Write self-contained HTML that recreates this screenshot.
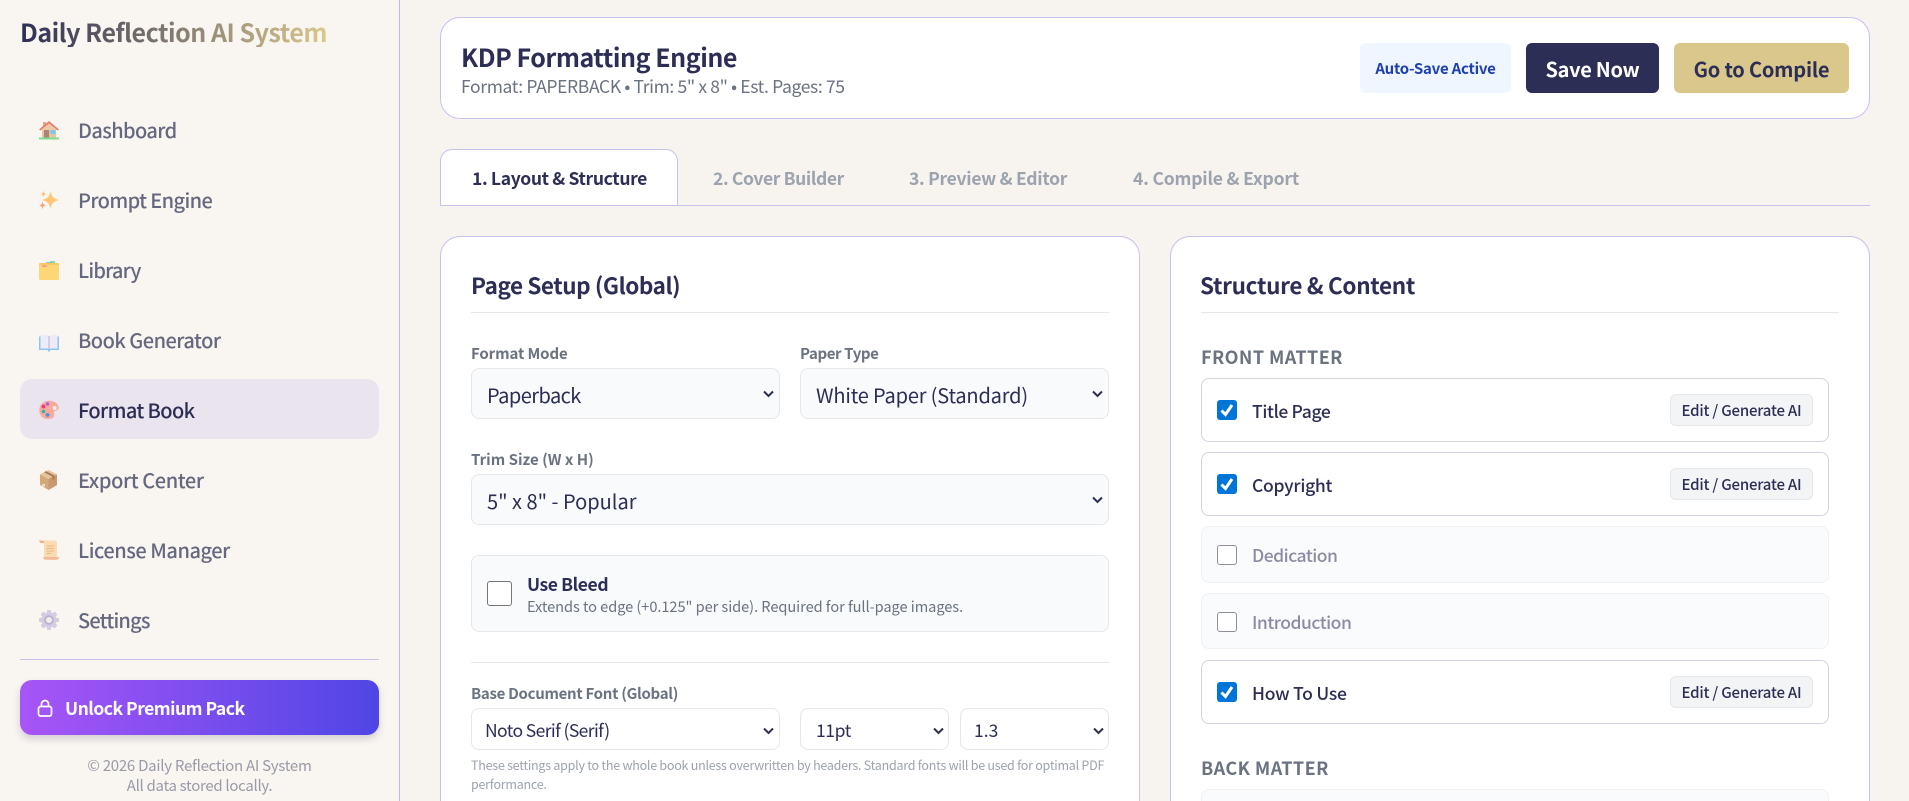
<!DOCTYPE html>
<html lang="en"><head><meta charset="utf-8"><title>KDP Formatting Engine</title>
<style>
*{box-sizing:border-box;margin:0;padding:0}
html,body{width:1909px;height:801px;overflow:hidden;background:#f7f4ef}
body{position:relative;font-family:"Noto Sans CJK JP","Liberation Sans",sans-serif;color:#2d2e55}
.b{position:absolute}
.t{position:absolute;height:30px;line-height:30px;white-space:nowrap}
.nav{font-size:20px;font-weight:500;color:#666880;left:78px;letter-spacing:-.62px}
.card{position:absolute;background:#fff;border:1.25px solid #c9c0ec;border-radius:20px}
.lab{font-size:15px;font-weight:700;color:#6b7280}
.sel{position:absolute;background:#f9fafb;border:1.25px solid #e5e7eb;border-radius:8px}
.seltxt{font-size:20px;color:#2d2e55}
.h2{font-size:22.5px;font-weight:700}
.item{position:absolute;left:1201px;width:628px;border:1.25px solid #d3d3de;border-radius:8px;background:#fff}
.item.off{background:#fafbfd;border-color:#f0f1f5}
.cb{position:absolute;left:1217px;width:20px;height:20px;border-radius:3px}
.cb.on{background:#0075d8}
.cb.no{background:#fff;border:1.25px solid #8f8f9a}
.il{left:1252px;font-size:17.5px;font-weight:500}
.il.dim{color:#8b8ca3}
.btn{position:absolute;left:1670px;width:143px;height:32px;background:#f3f4f6;border:1.25px solid #e5e7eb;border-radius:6px;font-size:15px;font-weight:500;line-height:31px;text-align:center;letter-spacing:-.2px}
.sec{left:1201px;font-size:18px;font-weight:700;color:#6b7280;letter-spacing:.42px}
svg{position:absolute;display:block}
</style></head><body>

<!-- Sidebar -->
<div class="b" style="left:0;top:0;width:400px;height:801px;background:#f9f6f1;border-right:1.25px solid #c4b9e6"></div>
<div class="t" style="left:20px;top:17px;font-size:25px;font-weight:700;letter-spacing:-.49px;background:linear-gradient(90deg,#2d2e55,#dcc98d);-webkit-background-clip:text;background-clip:text;color:transparent;width:310px">Daily Reflection AI System</div>

<div class="b" style="left:20px;top:379px;width:359px;height:60px;background:#e9e4ee;border-radius:12px"></div>

<!-- house -->
<svg style="left:39px;top:120px" width="20" height="20" viewBox="0 0 20 20"><rect x="3" y="8" width="14" height="10" fill="#e5c5a0"/><rect x="4" y="2" width="3" height="5" fill="#d9a98a"/><path d="M0 9.500 10 1l10 8.500-1.500 1L10 3.500 1.500 10.500z" fill="#ee7a68"/><path d="M3 9 10 3.500 17 9v2H3z" fill="#eccaa6"/><rect x="5" y="10" width="5" height="8" fill="#a98278"/><rect x="11.500" y="10" width="5" height="4" fill="#79c8f2"/><rect x="0" y="17.500" width="20" height="2" fill="#7fdc90"/></svg>
<div class="t nav" style="top:115px">Dashboard</div>
<!-- sparkles -->
<svg style="left:39px;top:190px" width="20" height="20" viewBox="0 0 20 20"><path d="M11.500 1C12.500 6.500 14.500 8.500 20 10 14.500 11.500 12.500 13.500 11.500 19 10.500 13.500 8.500 11.500 3 10 8.500 8.500 10.500 6.500 11.500 1z" fill="#fdc676"/><path d="M4.500 .5C4.900 2.800 5.500 3.500 7.500 4 5.500 4.500 4.900 5.200 4.500 7.500 4.100 5.200 3.500 4.500 1.500 4 3.500 3.500 4.100 2.800 4.500 .5z" fill="#f9c487"/><path d="M3.500 11.500C4 14 4.800 14.700 7 15.300 4.800 15.900 4 16.600 3.500 19.500 3 16.600 2.200 15.900 0 15.300 2.200 14.700 3 14 3.500 11.500z" fill="#f7a184"/></svg>
<div class="t nav" style="top:185px">Prompt Engine</div>
<!-- folder -->
<svg style="left:39px;top:260px" width="20" height="20" viewBox="0 0 20 20"><rect x="11" y="1" width="5" height="2.500" rx=".8" fill="#84d8a0"/><rect x="7" y="2.300" width="5" height="2.500" rx=".8" fill="#76aee4"/><path d="M0 4.500Q0 3 1.500 3H18.500Q20 3 20 4.500V18.500Q20 20 18.500 20H1.500Q0 20 0 18.500z" fill="#fdd676"/><path d="M0 4.500Q0 3 1.500 3H18.500Q20 3 20 4.500V5H0z" fill="#f6c765"/><rect x="3" y="5.300" width="5" height="1.700" rx=".7" fill="#f5978a"/></svg>
<div class="t nav" style="top:255px;letter-spacing:-.8px">Library</div>
<!-- book -->
<svg style="left:39px;top:334px" width="20" height="18" viewBox="0 0 20 18"><path d="M0 2.500V16H8Q9 16 9 17.500H11Q11 16 12 16H20V2.500z" fill="#8cc6f2"/><path d="M1.500 1Q7 .3 10 2 13 .3 18.500 1V14.500H11.500Q10 14.500 10 15.500 10 14.500 8.500 14.500H1.500z" fill="#ecebf7"/><path d="M10 2V15.500" stroke="#b4b2cc" stroke-width="1"/></svg>
<div class="t nav" style="top:325px;letter-spacing:-.53px">Book Generator</div>
<!-- palette -->
<svg style="left:39px;top:400px" width="20" height="20" viewBox="0 0 20 20"><path d="M10 .8C15.500.8 19.700 4.300 19.700 7.800 19.700 11 15.500 10.500 14.800 12 14.200 13.500 16 14.500 15 16.500 13.800 18.800 11 19 8.500 19 3.500 19 .3 15 .3 10 .3 5 4.500.8 10 .8z" fill="#fba99a"/><circle cx="15.700" cy="8" r="2" fill="#f6f1f0"/><circle cx="8.500" cy="4" r="1.800" fill="#b05ce0"/><circle cx="4.500" cy="6.500" r="1.900" fill="#e83a80"/><circle cx="4.500" cy="11.500" r="1.800" fill="#29b8a4"/><circle cx="8.500" cy="15" r="1.900" fill="#3d92ee"/></svg>
<div class="t nav" style="top:395px;color:#2d2e55">Format Book</div>
<!-- package -->
<svg style="left:39px;top:470px" width="19" height="20" viewBox="0 0 19 20"><path d="M9.500 0 18 4.500V15L9.500 20 1 15V4.500z" fill="#d5a877"/><path d="M9.500 0 18 4.500 9.500 9 1 4.500z" fill="#e8c59d"/><path d="M9.500 9V20L18 15V4.500z" fill="#c69a6e"/><path d="M5 2.200 13.500 6.800V10L15.500 9V5.500L7 1.100z" fill="#a47c5a"/><rect x="3" y="14" width="3" height="2.500" fill="#e8dcd0"/></svg>
<div class="t nav" style="top:465px;letter-spacing:-.42px">Export Center</div>
<!-- scroll -->
<svg style="left:39px;top:540px" width="20" height="20" viewBox="0 0 20 20"><path d="M0 .5H14Q18 .5 18 3V17H5V3Q5 1 3 1.500L0 2z" fill="#fbdcb0"/><path d="M0 .5H3.500Q5 .5 5 3H1.500z" fill="#f4ae86"/><path d="M4 17H20Q20 19.800 17 19.800H7Q4.500 19.800 4 17z" fill="#f6b994"/><path d="M7.500 6H15M7.500 8.500H15M7.500 11H15M7.500 13.500H12" stroke="#e6b68b" stroke-width="1"/></svg>
<div class="t nav" style="top:535px;letter-spacing:-.46px">License Manager</div>
<!-- gear -->
<svg style="left:39px;top:610px" width="20" height="20" viewBox="0 0 20 20"><g fill="#d3cde2"><circle cx="10" cy="10" r="7.500"/><rect x="7.800" y="0" width="4.400" height="20" rx="1.500"/><rect x="7.800" y="0" width="4.400" height="20" rx="1.500" transform="rotate(45 10 10)"/><rect x="7.800" y="0" width="4.400" height="20" rx="1.500" transform="rotate(90 10 10)"/><rect x="7.800" y="0" width="4.400" height="20" rx="1.500" transform="rotate(135 10 10)"/></g><circle cx="10" cy="10" r="4.800" fill="#b9b2ca"/><circle cx="10" cy="10" r="3" fill="#efedf1"/></svg>
<div class="t nav" style="top:605px;letter-spacing:-.8px">Settings</div>

<div class="b" style="left:20px;top:659px;width:359px;height:1.250px;background:#c9bfe6"></div>
<div class="b" style="left:20px;top:680px;width:359px;height:55px;border-radius:12px;background:linear-gradient(90deg,#a855f7,#4f46e5);box-shadow:0 4px 8px rgba(60,50,90,.2)"></div>
<svg style="left:37px;top:699px" width="16" height="18" viewBox="0 0 16 18" fill="none" stroke="#fff" stroke-width="1.700"><rect x="1.500" y="7.500" width="13" height="9.500" rx="2"/><path d="M4.500 7.500V5a3.500 3.500 0 0 1 7 0V7.500"/></svg>
<div class="t" style="left:65px;top:694px;font-size:17.500px;font-weight:700;color:#fff;letter-spacing:-.5px">Unlock Premium Pack</div>
<div class="t" style="left:0;width:399px;text-align:center;top:751px;font-size:15px;color:#9a9aa8;letter-spacing:-.26px">© 2026 Daily Reflection AI System</div>
<div class="t" style="left:0;width:399px;text-align:center;top:771px;font-size:15px;color:#9a9aa8;letter-spacing:-.3px">All data stored locally.</div>

<!-- Header -->
<div class="card" style="left:440px;top:17px;width:1430px;height:101.500px"></div>
<div class="t" style="left:461px;top:42px;font-size:25px;font-weight:700;letter-spacing:-.46px">KDP Formatting Engine</div>
<div class="t" style="left:461px;top:72px;font-size:17.500px;color:#6b7280;letter-spacing:-.36px">Format: PAPERBACK • Trim: 5" x 8" • Est. Pages: 75</div>
<div class="b" style="left:1360px;top:43px;width:151px;height:50px;background:#eff6ff;border-radius:6px;text-align:center;line-height:52px;font-size:15px;font-weight:700;color:#1e40af;letter-spacing:-.23px">Auto-Save Active</div>
<div class="b" style="left:1526px;top:43px;width:133px;height:50px;background:#2d2e55;border-radius:6px;text-align:center;line-height:52px;font-size:20px;font-weight:700;color:#fff;letter-spacing:-.3px">Save Now</div>
<div class="b" style="left:1674px;top:43px;width:175px;height:50px;background:#d9c78c;border-radius:6px;text-align:center;line-height:52px;font-size:20px;font-weight:700;color:#2d2e55;letter-spacing:-.2px">Go to Compile</div>

<!-- Tabs -->
<div class="b" style="left:440px;top:149px;width:238px;height:57px;background:#fff;border:1.250px solid #c9c0ec;border-bottom:none;border-radius:12px 12px 0 0"></div>
<div class="b" style="left:440px;top:205px;width:1430px;height:1.250px;background:#c9c0ec"></div>
<div class="t" style="left:472px;top:164px;font-size:17.500px;font-weight:700;letter-spacing:-.35px">1. Layout &amp; Structure</div>
<div class="t" style="left:713px;top:164px;font-size:17.500px;font-weight:700;color:#9ca3af;letter-spacing:-.38px">2. Cover Builder</div>
<div class="t" style="left:909px;top:164px;font-size:17.500px;font-weight:700;color:#9ca3af;letter-spacing:-.28px">3. Preview &amp; Editor</div>
<div class="t" style="left:1133px;top:164px;font-size:17.500px;font-weight:700;color:#9ca3af;letter-spacing:-.18px">4. Compile &amp; Export</div>

<!-- Left card -->
<div class="card" style="left:440px;top:236px;width:700px;height:565px;border-bottom:none;border-radius:20px 20px 0 0"></div>
<div class="t h2" style="left:471px;top:270px;letter-spacing:-.45px">Page Setup (Global)</div>
<div class="b" style="left:471px;top:312px;width:638px;height:1.250px;background:#e5e7eb"></div>

<div class="t lab" style="left:471px;top:339px;letter-spacing:-.1px">Format Mode</div>
<div class="t lab" style="left:800px;top:339px;letter-spacing:-.4px">Paper Type</div>
<div class="sel" style="left:471px;top:368px;width:309px;height:51px"></div>
<div class="t seltxt" style="left:487px;top:380px;letter-spacing:-.55px">Paperback</div>
<svg style="left:763px;top:390px" width="11" height="8" viewBox="0 0 11 8" fill="none" stroke="#2d2e55" stroke-width="2"><path d="M1 1.500 5.500 6 10 1.500"/></svg>
<div class="sel" style="left:800px;top:368px;width:309px;height:51px"></div>
<div class="t seltxt" style="left:816px;top:380px;letter-spacing:-.17px">White Paper (Standard)</div>
<svg style="left:1092px;top:390px" width="11" height="8" viewBox="0 0 11 8" fill="none" stroke="#2d2e55" stroke-width="2"><path d="M1 1.500 5.500 6 10 1.500"/></svg>

<div class="t lab" style="left:471px;top:445px">Trim Size (W x H)</div>
<div class="sel" style="left:471px;top:474px;width:638px;height:51px"></div>
<div class="t seltxt" style="left:487px;top:486px">5" x 8" - Popular</div>
<svg style="left:1092px;top:496px" width="11" height="8" viewBox="0 0 11 8" fill="none" stroke="#2d2e55" stroke-width="2"><path d="M1 1.500 5.500 6 10 1.500"/></svg>

<div class="sel" style="left:471px;top:555px;width:638px;height:77px"></div>
<div class="b" style="left:487px;top:581px;width:25px;height:25px;background:#fff;border:1.250px solid #767676;border-radius:3px"></div>
<div class="t" style="left:527px;top:570px;font-size:17.500px;font-weight:700;letter-spacing:-.4px">Use Bleed</div>
<div class="t" style="left:527px;top:592px;font-size:14.600px;color:#6b7280;letter-spacing:-.055px">Extends to edge (+0.125" per side). Required for full-page images.</div>
<div class="b" style="left:471px;top:662px;width:638px;height:1.250px;background:#e5e7eb"></div>

<div class="t lab" style="left:471px;top:679px;letter-spacing:-.3px">Base Document Font (Global)</div>
<div class="sel" style="left:471px;top:708px;width:309px;height:42px;background:#fff"></div>
<div class="t" style="left:485px;top:716px;font-size:17.500px;letter-spacing:-.6px">Noto Serif (Serif)</div>
<svg style="left:763px;top:727px" width="11" height="8" viewBox="0 0 11 8" fill="none" stroke="#2d2e55" stroke-width="2"><path d="M1 1.500 5.500 6 10 1.500"/></svg>
<div class="sel" style="left:800px;top:708px;width:149px;height:42px;background:#fff"></div>
<div class="t" style="left:816px;top:716px;font-size:17.500px;letter-spacing:-.4px">11pt</div>
<svg style="left:933px;top:727px" width="11" height="8" viewBox="0 0 11 8" fill="none" stroke="#2d2e55" stroke-width="2"><path d="M1 1.500 5.500 6 10 1.500"/></svg>
<div class="sel" style="left:960px;top:708px;width:149px;height:42px;background:#fff"></div>
<div class="t" style="left:974px;top:716px;font-size:17.500px">1.3</div>
<svg style="left:1093px;top:727px" width="11" height="8" viewBox="0 0 11 8" fill="none" stroke="#2d2e55" stroke-width="2"><path d="M1 1.500 5.500 6 10 1.500"/></svg>
<div class="t" style="left:471px;top:750px;font-size:12.500px;color:#9ca3af;letter-spacing:-.25px">These settings apply to the whole book unless overwritten by headers. Standard fonts will be used for optimal PDF</div>
<div class="t" style="left:471px;top:769px;font-size:12.500px;color:#9ca3af;letter-spacing:-.25px">performance.</div>

<!-- Right card -->
<div class="card" style="left:1170px;top:236px;width:700px;height:565px;border-bottom:none;border-radius:20px 20px 0 0"></div>
<div class="t h2" style="left:1200px;top:270px;letter-spacing:-.32px">Structure &amp; Content</div>
<div class="b" style="left:1201px;top:312px;width:638px;height:1.250px;background:#e5e7eb"></div>
<div class="t sec" style="top:341.500px">FRONT MATTER</div>

<div class="item" style="top:378px;height:64px"></div>
<div class="cb on" style="top:400px"></div>
<svg style="left:1217px;top:400px" width="20" height="20" viewBox="0 0 20 20" fill="none" stroke="#fff" stroke-width="3"><path d="M4.500 10.500 8.500 14.500 15 5"/></svg>
<div class="t il" style="top:397px;letter-spacing:-.36px">Title Page</div>
<div class="btn" style="top:394px">Edit / Generate AI</div>

<div class="item" style="top:452px;height:64px"></div>
<div class="cb on" style="top:474px"></div>
<svg style="left:1217px;top:474px" width="20" height="20" viewBox="0 0 20 20" fill="none" stroke="#fff" stroke-width="3"><path d="M4.500 10.500 8.500 14.500 15 5"/></svg>
<div class="t il" style="top:471px;letter-spacing:-.27px">Copyright</div>
<div class="btn" style="top:468px">Edit / Generate AI</div>

<div class="item off" style="top:526px;height:57px"></div>
<div class="cb no" style="top:545px"></div>
<div class="t il dim" style="top:541px;letter-spacing:-.5px">Dedication</div>

<div class="item off" style="top:593px;height:56px"></div>
<div class="cb no" style="top:612px"></div>
<div class="t il dim" style="top:608px;letter-spacing:-.5px">Introduction</div>

<div class="item" style="top:660px;height:64px"></div>
<div class="cb on" style="top:682px"></div>
<svg style="left:1217px;top:682px" width="20" height="20" viewBox="0 0 20 20" fill="none" stroke="#fff" stroke-width="3"><path d="M4.500 10.500 8.500 14.500 15 5"/></svg>
<div class="t il" style="top:679px;letter-spacing:-.25px">How To Use</div>
<div class="btn" style="top:676px">Edit / Generate AI</div>

<div class="t sec" style="top:752.500px">BACK MATTER</div>
<div class="item off" style="top:789px;height:12px;border-bottom:none;border-radius:8px 8px 0 0"></div>

</body></html>
